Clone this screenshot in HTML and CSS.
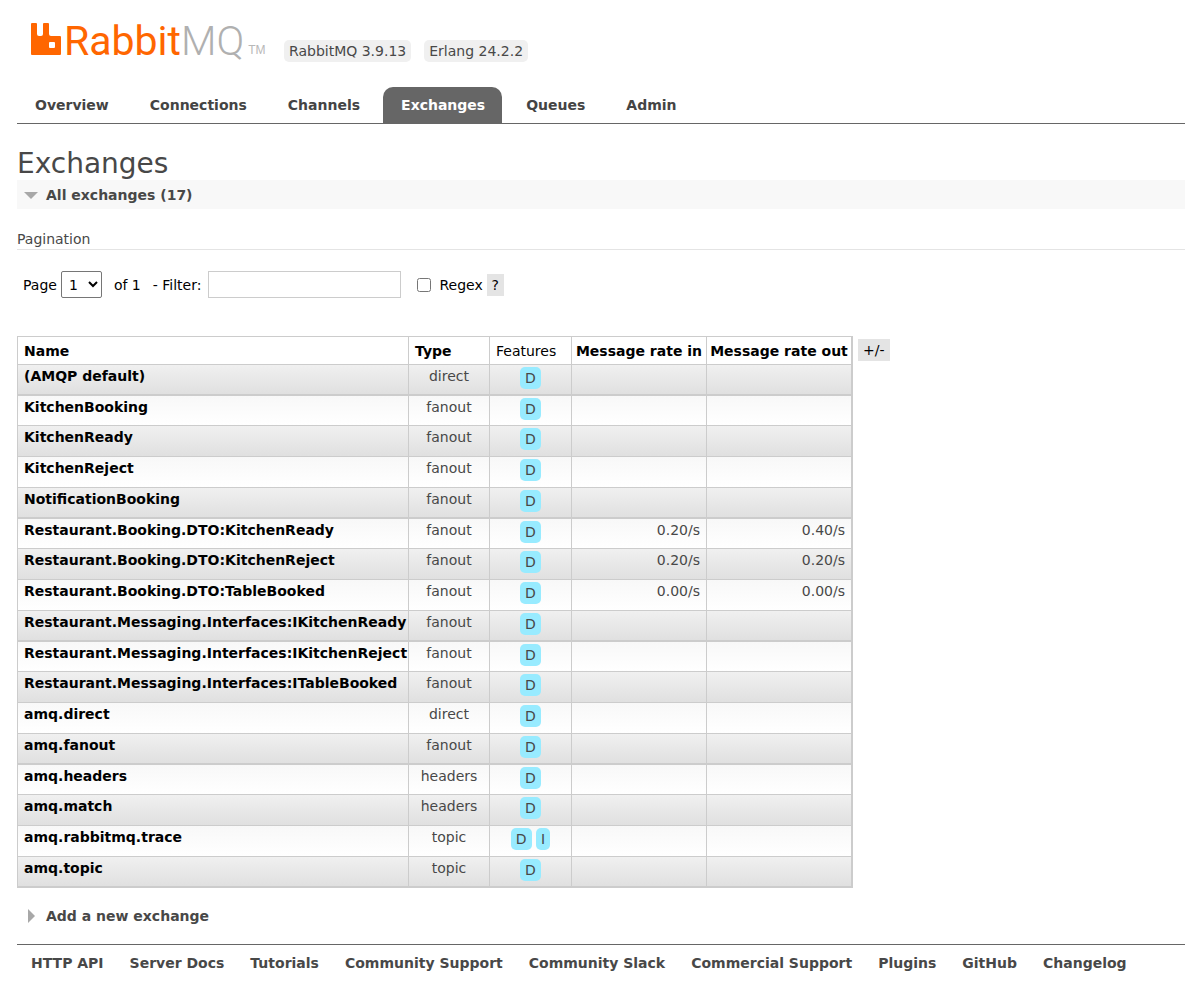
FILE: index.html
```html
<!DOCTYPE html>
<html lang="en">
<head>
<meta charset="utf-8">
<title>RabbitMQ Management</title>
<link rel="stylesheet" href="styles.css">
</head>
<body>
<header>
  <div class="brand">
    <a class="logo" href="#">
      <svg class="mark" width="30" height="32" viewBox="0 0 30 32" aria-hidden="true"><path fill="#f60" fill-rule="evenodd" d="M1 0h4q1 0 1 1v10q0 2 2 2h2q2 0 2-2V1q0-1 1-1h4q1 0 1 1v10q0 2 2 2h9q1 0 1 1v17q0 1-1 1H1q-1 0-1-1V1q0-1 1-1zM19 19q-1 0-1 1v4q0 1 1 1h4q1 0 1-1v-4q0-1-1-1z"/></svg>
      <span class="word">Rabbit<span class="mq">MQ</span></span><span class="tm">TM</span>
    </a>
    <span class="version">RabbitMQ 3.9.13</span>
    <span class="version">Erlang 24.2.2</span>
  </div>
  <nav>
    <ul class="tabs">
      <li><a href="#">Overview</a></li>
      <li><a href="#">Connections</a></li>
      <li><a href="#">Channels</a></li>
      <li><a href="#" class="selected" aria-current="page">Exchanges</a></li>
      <li><a href="#">Queues</a></li>
      <li><a href="#">Admin</a></li>
    </ul>
  </nav>
</header>
<main>
  <h1>Exchanges</h1>
  <h2 class="section open"><svg class="arrow" width="14" height="14" viewBox="0 0 14 14" aria-hidden="true"><path fill="#a8a8a8" d="M0 4h14l-7 7z"/></svg>All exchanges (17)</h2>
  <h3>Pagination</h3>
  <form class="pager">
    <label for="page">Page</label>
    <select id="page"><option>1</option></select>
    <span class="total">of 1</span>
    <label class="filter-label" for="filter">- Filter:</label>
    <input type="text" id="filter">
    <input type="checkbox" id="regex">
    <label for="regex">Regex</label>
    <button type="button" class="help">?</button>
  </form>
  <div class="listing">
    <table>
      <colgroup><col class="c-name"><col class="c-type"><col class="c-features"><col class="c-rate"><col class="c-rate-out"></colgroup>
      <thead><tr><th>Name</th><th>Type</th><th class="plain">Features</th><th class="rate">Message rate in</th><th class="rate">Message rate out</th></tr></thead>
      <tbody>
        <tr><td><a href="#">(AMQP default)</a></td><td>direct</td><td><abbr>D</abbr></td><td></td><td></td></tr>
        <tr><td><a href="#">KitchenBooking</a></td><td>fanout</td><td><abbr>D</abbr></td><td></td><td></td></tr>
        <tr><td><a href="#">KitchenReady</a></td><td>fanout</td><td><abbr>D</abbr></td><td></td><td></td></tr>
        <tr><td><a href="#">KitchenReject</a></td><td>fanout</td><td><abbr>D</abbr></td><td></td><td></td></tr>
        <tr><td><a href="#">NotificationBooking</a></td><td>fanout</td><td><abbr>D</abbr></td><td></td><td></td></tr>
        <tr><td><a href="#">Restaurant.Booking.DTO:KitchenReady</a></td><td>fanout</td><td><abbr>D</abbr></td><td>0.20/s</td><td>0.40/s</td></tr>
        <tr><td><a href="#">Restaurant.Booking.DTO:KitchenReject</a></td><td>fanout</td><td><abbr>D</abbr></td><td>0.20/s</td><td>0.20/s</td></tr>
        <tr><td><a href="#">Restaurant.Booking.DTO:TableBooked</a></td><td>fanout</td><td><abbr>D</abbr></td><td>0.00/s</td><td>0.00/s</td></tr>
        <tr><td><a href="#">Restaurant.Messaging.Interfaces:IKitchenReady</a></td><td>fanout</td><td><abbr>D</abbr></td><td></td><td></td></tr>
        <tr><td><a href="#">Restaurant.Messaging.Interfaces:IKitchenReject</a></td><td>fanout</td><td><abbr>D</abbr></td><td></td><td></td></tr>
        <tr><td><a href="#">Restaurant.Messaging.Interfaces:ITableBooked</a></td><td>fanout</td><td><abbr>D</abbr></td><td></td><td></td></tr>
        <tr><td><a href="#">amq.direct</a></td><td>direct</td><td><abbr>D</abbr></td><td></td><td></td></tr>
        <tr><td><a href="#">amq.fanout</a></td><td>fanout</td><td><abbr>D</abbr></td><td></td><td></td></tr>
        <tr><td><a href="#">amq.headers</a></td><td>headers</td><td><abbr>D</abbr></td><td></td><td></td></tr>
        <tr><td><a href="#">amq.match</a></td><td>headers</td><td><abbr>D</abbr></td><td></td><td></td></tr>
        <tr><td><a href="#">amq.rabbitmq.trace</a></td><td>topic</td><td><abbr>D</abbr> <abbr>I</abbr></td><td></td><td></td></tr>
        <tr><td><a href="#">amq.topic</a></td><td>topic</td><td><abbr>D</abbr></td><td></td><td></td></tr>
      </tbody>
    </table>
    <button type="button" class="columns">+/-</button>
  </div>
  <h2 class="section"><svg class="arrow" width="14" height="14" viewBox="0 0 14 14" aria-hidden="true"><path fill="#a8a8a8" d="M4 0l7 7-7 7z"/></svg>Add a new exchange</h2>
</main>
<footer>
  <a href="#">HTTP API</a>
  <a href="#">Server Docs</a>
  <a href="#">Tutorials</a>
  <a href="#">Community Support</a>
  <a href="#">Community Slack</a>
  <a href="#">Commercial Support</a>
  <a href="#">Plugins</a>
  <a href="#">GitHub</a>
  <a href="#">Changelog</a>
</footer>
</body>
</html>
```
FILE: styles.css
```css
* { box-sizing: border-box; }
body {
  margin: 0;
  padding: 20px 0 0 17px;
  font: 14px/20px "DejaVu Sans", Verdana, sans-serif;
  color: #484848;
  background: #fff;
}
a { color: inherit; text-decoration: none; }

.brand { display: flex; align-items: flex-end; height: 42px; padding-left: 14px; }
.logo { display: flex; align-items: flex-end; width: 239px; margin-right: 14px; height: 42px; padding-bottom: 7px; }
.mark { flex: none; margin-right: 3px; }
.word { font: 400 41px/28px Roboto, sans-serif; color: #f60; }
.mq { font-weight: 300; color: #b0b0b0; }
.tm { margin-left: 4px; font: 12px/10px "Liberation Sans", sans-serif; color: #b8b8b8; }
.version {
  padding: 0 5px;
  margin-right: 13px;
  line-height: 22px;
  border-radius: 5px;
  background: #f0f0f0;
}

.tabs {
  display: flex;
  gap: 6px;
  margin: 25px 0 0;
  padding: 0;
  list-style: none;
  border-bottom: 1px solid #666;
}
.tabs a {
  display: block;
  padding: 8px 17px 8px 18px;
  font-weight: bold;
  color: #444;
}
.tabs .selected {
  color: #fff;
  background: #666;
  border-radius: 10px 10px 0 0;
}

h1 { margin: 24px 0 0; font-size: 28px; line-height: 32px; font-weight: normal; }
.section {
  display: flex;
  align-items: center;
  gap: 8px;
  margin: 0;
  padding-left: 7px;
  height: 29px;
  font-size: 14px;
}
.section.open { background: #f8f8f8; }
h3 {
  margin: 20px 0 0;
  font-size: 14px;
  line-height: 20px;
  font-weight: normal;
  border-bottom: 1px solid #e4e4e4;
}

.pager {
  display: flex;
  align-items: center;
  margin: 21px 0 38px;
  padding-left: 6px;
  color: #000;
}
.pager input, .pager select { margin: 0; font: inherit; }
#page {
  width: 41px;
  height: 27px;
  margin: 0 12px 0 4px;
  padding-left: 3px;
  border: 1px solid #767676;
  border-radius: 2px;
  background: #fff;
}
.filter-label { margin: 0 7px 0 12px; }
#filter { width: 193px; height: 27px; padding: 3px; border: 1px solid #ccc; }
#regex { width: 14px; height: 14px; margin: 0 8px 0 16px; }
button { border: 0; font: inherit; color: #000; background: #e4e4e4; }
.help { width: 17px; height: 22px; margin-left: 4px; padding: 0; }

.listing { display: flex; align-items: flex-start; }
table {
  table-layout: fixed;
  width: 836px;
  border-collapse: separate;
  border-spacing: 0;
  border: solid #ccc;
  border-width: 1px 1px 0 1px;
}
.c-name { width: 391px; }
.c-type { width: 81px; }
.c-features { width: 82px; }
.c-rate { width: 135px; }
.c-rate-out { width: 145px; }
th, td {
  padding: 0 6px;
  border-right: 1px solid #ccc;
  border-bottom: 1px solid #ccc;
  white-space: nowrap;
}
th { height: 28px; text-align: left; color: #000; }
th.plain { font-weight: normal; }
th.rate { padding: 0; text-align: center; }
td { height: 31px; padding-top: 1px; vertical-align: top; text-align: center; }
tr:nth-child(4n+2) td { height: 30px; }
tr:nth-child(4n+1) td { border-bottom-width: 2px; }
td:first-child { text-align: left; font-weight: bold; color: #000; }
td:nth-child(n+4) { text-align: right; }
tbody tr:nth-child(odd) td { background: linear-gradient(#f0f0f0, #e0e0e0); }
tbody tr:nth-child(even) td { background: linear-gradient(#f8f8f8, #fff); }
thead tr th { border-bottom-width: 1px; }
abbr {
  display: inline-block;
  margin-top: 1px;
  padding: 0 5px;
  line-height: 22px;
  border-radius: 5px;
  background: #98ebff;
}
.columns { height: 22px; margin: 3px 0 0 5px; padding: 0 5px; }
.listing + .section { margin-top: 13px; }

footer {
  display: flex;
  flex-wrap: wrap;
  gap: 0 26px;
  margin-top: 14px;
  padding: 8px 0 8px 14px;
  border-top: 1px solid #666;
  font-weight: bold;
}
```
